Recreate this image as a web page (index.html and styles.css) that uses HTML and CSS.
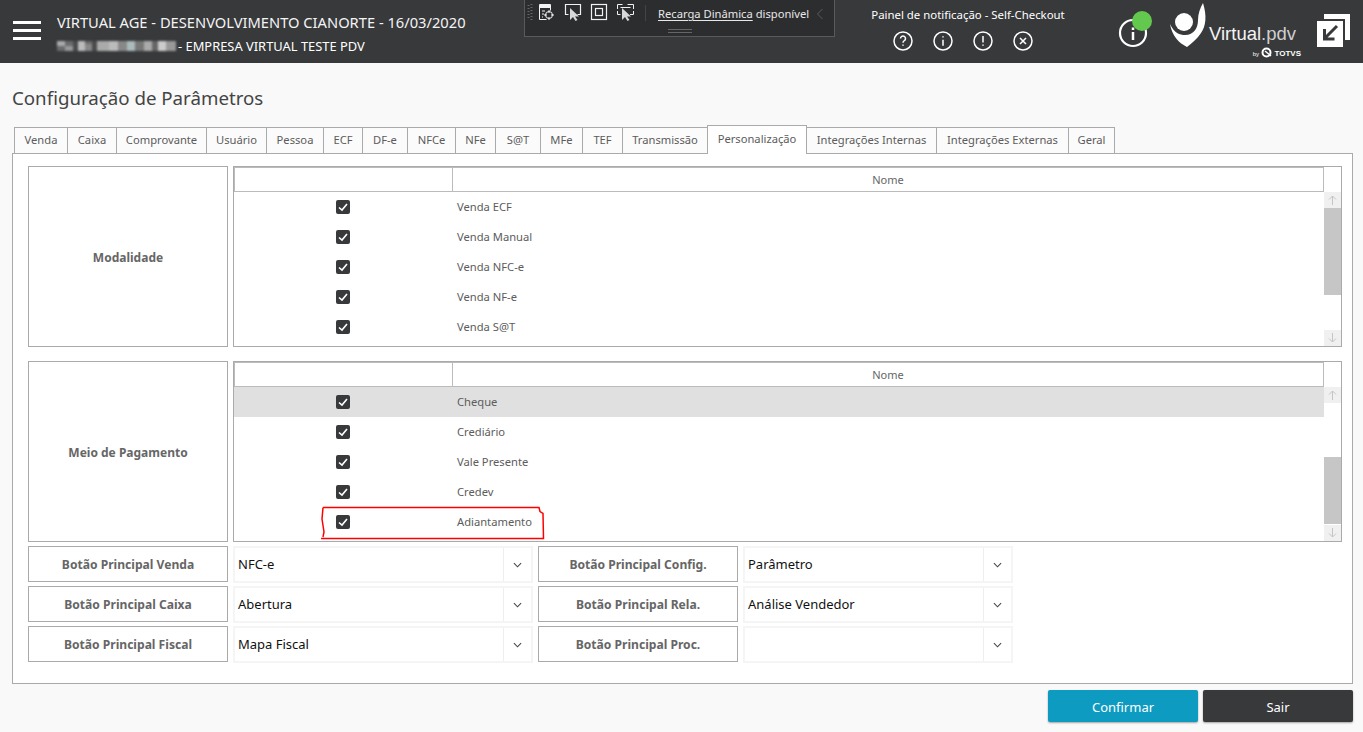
FILE: index.html
```html
<!DOCTYPE html>
<html lang="pt-BR">
<head>
<meta charset="utf-8">
<title>Configuração de Parâmetros</title>
<link rel="stylesheet" href="styles.css">
</head>
<body>
<header class="topbar">
  <div class="menu"><span></span><span></span><span></span></div>
  <div class="titles">
    <div class="title-main">VIRTUAL AGE - DESENVOLVIMENTO CIANORTE - 16/03/2020</div>
    <div class="title-sub">
      <svg class="blur" width="119" height="10" viewBox="0 0 119 10"><rect width="119" height="10" fill="#6a6b6d"/><rect x="0" width="8" height="5" fill="#aaa"/><rect x="8" y="5" width="8" height="5" fill="#999"/><rect x="16" width="5" height="10" fill="#4a4b4d"/><rect x="21" width="7" height="10" fill="#bbb"/><rect x="28" y="3" width="7" height="7" fill="#888"/><rect x="35" width="5" height="10" fill="#4a4b4d"/><rect x="40" width="12" height="10" fill="#aaa"/><rect x="52" width="9" height="10" fill="#bbb"/><rect x="61" width="9" height="10" fill="#888"/><rect x="70" width="8" height="10" fill="#abb"/><rect x="78" width="9" height="10" fill="#777"/><rect x="87" width="8" height="10" fill="#aaa"/><rect x="95" width="6" height="10" fill="#666"/><rect x="101" width="8" height="10" fill="#ccc"/><rect x="109" width="10" height="10" fill="#999"/></svg>
      <span>- EMPRESA VIRTUAL TESTE PDV</span>
    </div>
  </div>
  <div class="live">
    <svg class="live-icons" width="125" height="24" viewBox="0 0 125 24" fill="none" stroke="#f2f2f2" stroke-width="1">
      <path d="M3.500 5v14M6.500 4v16" stroke="#666" stroke-width="2" stroke-dasharray="1 2"/>
      <path d="M21.500 19.500h-7v-15h11v6"/><path d="M14 5h12v3H14z" fill="#f2f2f2" stroke="none"/><path d="M17 11h3M17 14h2M17 17h1"/>
      <circle cx="24" cy="15" r="3.500"/><path d="M24 10v3M24 17v3M19 15h3M26 15h3"/>
      <path d="M43.500 14.500h-3v-10h15v10h-3" stroke-width="1.200"/><path d="M45 8v12l3-3 2.500 4 2-1-2.500-3.500h4z" fill="#d8d8d8" stroke="none"/>
      <rect x="66.500" y="4.500" width="15" height="15" stroke-width="1.200"/><rect x="70.500" y="8.500" width="7" height="7" stroke-width="1.200"/>
      <path d="M92.500 9V4.500h5M102.500 4.500h6v4.500M92.500 11v3.500h3M105 14.500h3.500V11M95.500 7.500h10"/><path d="M97 8v12l3-3 2.500 4 2-1-2.500-3.500h4z" fill="#d8d8d8" stroke="none"/>
      <path d="M120.500 5v16" stroke="#444"/>
    </svg>
    <div class="live-text"><u>Recarga Dinâmica</u> disponível</div>
    <svg class="live-chev" width="8" height="12" viewBox="0 0 8 12" fill="none" stroke="#5c5c5c"><path d="M6.500 1L1.500 6l5 5"/></svg>
    <div class="grip"></div>
  </div>
  <div class="notif">
    <div class="notif-title">Painel de notificação - Self-Checkout</div>
    <div class="notif-icons">
      <svg class="circ" viewBox="0 0 20 20"><circle cx="10" cy="10" r="9"/><path d="M7.500 7.500a2.500 2.500 0 1 1 3.800 2.200c-.9.500-1.300 1-1.300 2"/><path d="M10 13.600v1.200"/></svg>
      <svg class="circ" viewBox="0 0 20 20"><circle cx="10" cy="10" r="9"/><path d="M10 5.200v1.400M10 8.800v6"/></svg>
      <svg class="circ" viewBox="0 0 20 20"><circle cx="10" cy="10" r="9"/><path d="M10 5v6.400M10 13.400v1.400"/></svg>
      <svg class="circ" viewBox="0 0 20 20"><circle cx="10" cy="10" r="9"/><path d="M7 7l6 6M13 7l-6 6"/></svg>
    </div>
  </div>
  <div class="info">
    <svg width="34" height="37" viewBox="0 0 34 37"><circle cx="15" cy="22" r="13" fill="none" stroke="#fff" stroke-width="2.200"/><path d="M15 16.500v2.500M15 21v8" stroke="#fff" stroke-width="2.500"/><circle cx="24" cy="10" r="10" fill="#63c94e"/></svg>
  </div>
  <div class="logo">
    <svg width="40" height="46" viewBox="0 0 40 46"><path d="M33 1C37 14 36 24 31 31 27 37 22 41 17 45 9 41 2 34 0 22 4 31 10 33 15 33 24 33 28 26 28 18 28 12 30 6 33 1z" fill="#fff"/><circle cx="14" cy="20" r="9" fill="#fff"/></svg>
    <div class="logo-text">
      <div class="logo-name">Virtual<span>.pdv</span></div>
      <div class="logo-by"><small>by</small> <svg width="11" height="11" viewBox="0 0 11 11" fill="none" stroke="#fff" stroke-width="2"><circle cx="5.500" cy="5.500" r="4"/><path d="M4 4l6 5" stroke-width="1.500"/></svg> TOTVS</div>
    </div>
  </div>
  <div class="exit">
    <svg width="33" height="33" viewBox="0 0 33 33"><path d="M7 0h26v26h-5V5H7z" fill="#fff"/><rect x="0" y="7" width="26" height="26" fill="#fff"/><path d="M20 12L8 24M7.500 15v10h10" fill="none" stroke="#38393b" stroke-width="3"/></svg>
  </div>
</header>

<main class="page">
  <h1 class="page-title">Configuração de Parâmetros</h1>
  <nav class="tabs">
    <div class="tab">Venda</div><div class="tab">Caixa</div><div class="tab">Comprovante</div><div class="tab">Usuário</div><div class="tab">Pessoa</div><div class="tab">ECF</div><div class="tab">DF-e</div><div class="tab">NFCe</div><div class="tab">NFe</div><div class="tab">S@T</div><div class="tab">MFe</div><div class="tab">TEF</div><div class="tab">Transmissão</div><div class="tab active">Personalização</div><div class="tab">Integrações Internas</div><div class="tab">Integrações Externas</div><div class="tab">Geral</div>
  </nav>
  <section class="panel">
    <div class="group">
      <div class="label">Modalidade</div>
      <div class="table">
        <div class="thead"><div class="th"></div><div class="th">Nome</div></div>
        <div class="tbody">
          <div class="rows">
            <div class="row"><span class="check"><svg viewBox="0 0 14 14"><path d="M3 7.500l3 2.500 5-6"/></svg></span><span class="cell">Venda ECF</span></div>
            <div class="row"><span class="check"><svg viewBox="0 0 14 14"><path d="M3 7.500l3 2.500 5-6"/></svg></span><span class="cell">Venda Manual</span></div>
            <div class="row"><span class="check"><svg viewBox="0 0 14 14"><path d="M3 7.500l3 2.500 5-6"/></svg></span><span class="cell">Venda NFC-e</span></div>
            <div class="row"><span class="check"><svg viewBox="0 0 14 14"><path d="M3 7.500l3 2.500 5-6"/></svg></span><span class="cell">Venda NF-e</span></div>
            <div class="row"><span class="check"><svg viewBox="0 0 14 14"><path d="M3 7.500l3 2.500 5-6"/></svg></span><span class="cell">Venda S@T</span></div>
          </div>
          <div class="scroll">
            <svg class="arrow" viewBox="0 0 17 16"><path d="M8.500 13V4M5 7.500L8.500 4 12 7.500"/></svg>
            <div class="track"><div class="thumb thumb-top"></div></div>
            <svg class="arrow" viewBox="0 0 17 16"><path d="M8.500 3v9M5 8.500L8.500 12 12 8.500"/></svg>
          </div>
        </div>
      </div>
    </div>
    <div class="group group-second">
      <div class="label">Meio de Pagamento</div>
      <div class="table">
        <div class="thead"><div class="th"></div><div class="th">Nome</div></div>
        <div class="tbody">
          <div class="rows">
            <div class="row selected"><span class="check"><svg viewBox="0 0 14 14"><path d="M3 7.500l3 2.500 5-6"/></svg></span><span class="cell">Cheque</span></div>
            <div class="row"><span class="check"><svg viewBox="0 0 14 14"><path d="M3 7.500l3 2.500 5-6"/></svg></span><span class="cell">Crediário</span></div>
            <div class="row"><span class="check"><svg viewBox="0 0 14 14"><path d="M3 7.500l3 2.500 5-6"/></svg></span><span class="cell">Vale Presente</span></div>
            <div class="row"><span class="check"><svg viewBox="0 0 14 14"><path d="M3 7.500l3 2.500 5-6"/></svg></span><span class="cell">Credev</span></div>
            <div class="row"><span class="check"><svg viewBox="0 0 14 14"><path d="M3 7.500l3 2.500 5-6"/></svg></span><span class="cell">Adiantamento</span></div>
          </div>
          <div class="scroll">
            <svg class="arrow" viewBox="0 0 17 16"><path d="M8.500 13V4M5 7.500L8.500 4 12 7.500"/></svg>
            <div class="track"><div class="thumb thumb-bottom"></div></div>
            <svg class="arrow" viewBox="0 0 17 16"><path d="M8.500 3v9M5 8.500L8.500 12 12 8.500"/></svg>
          </div>
        </div>
        <svg class="markup" width="226" height="36" viewBox="0 0 226 36" fill="none" stroke="#f00" stroke-width="1.500"><path d="M3 1.500H219l1 4 3 2 .5 25H1M3 1.500L2 13l2 13-1 5"/></svg>
      </div>
    </div>
    <div class="fields">
      <div class="label small">Botão Principal Venda</div>
      <div class="select"><span>NFC-e</span><i><svg viewBox="0 0 10 6"><path d="M1 1l4 4 4-4"/></svg></i></div>
      <div class="label small">Botão Principal Config.</div>
      <div class="select"><span>Parâmetro</span><i><svg viewBox="0 0 10 6"><path d="M1 1l4 4 4-4"/></svg></i></div>
      <div class="label small">Botão Principal Caixa</div>
      <div class="select"><span>Abertura</span><i><svg viewBox="0 0 10 6"><path d="M1 1l4 4 4-4"/></svg></i></div>
      <div class="label small">Botão Principal Rela.</div>
      <div class="select"><span>Análise Vendedor</span><i><svg viewBox="0 0 10 6"><path d="M1 1l4 4 4-4"/></svg></i></div>
      <div class="label small">Botão Principal Fiscal</div>
      <div class="select"><span>Mapa Fiscal</span><i><svg viewBox="0 0 10 6"><path d="M1 1l4 4 4-4"/></svg></i></div>
      <div class="label small">Botão Principal Proc.</div>
      <div class="select"><span></span><i><svg viewBox="0 0 10 6"><path d="M1 1l4 4 4-4"/></svg></i></div>
    </div>
  </section>
  <footer class="actions">
    <button class="btn btn-primary">Confirmar</button>
    <button class="btn btn-dark">Sair</button>
  </footer>
</main>
</body>
</html>
```

FILE: styles.css
```css
* { box-sizing: border-box; }
html, body { margin: 0; height: 100%; }
body {
  width: 1363px;
  height: 732px;
  overflow: hidden;
  background: #f9f9f9;
  font-family: "Noto Sans", "Liberation Sans", sans-serif;
  font-size: 11.2px;
  color: #555;
}

/* top bar */
.topbar {
  height: 63px;
  background: #38393b;
  color: #fff;
  display: flex;
  align-items: flex-start;
}
.menu {
  width: 57px;
  padding: 21px 0 0 13px;
  display: flex;
  flex-direction: column;
  gap: 5px;
}
.menu span { display: block; width: 28px; height: 3px; background: #fff; }
.titles { width: 467px; padding-top: 12px; }
.title-main { font-size: 14.7px; line-height: 20px; color: #f4f4f4; white-space: nowrap; }
.title-sub { display: flex; align-items: center; gap: 2px; margin-top: 6px; font-size: 12.9px; line-height: 16px; white-space: nowrap; }
.blur { filter: blur(1px); }

.live {
  position: relative;
  width: 311px;
  height: 37px;
  background: #2c2d2f;
  border: 1px solid #5a5a5a;
  border-top: 0;
  display: flex;
  align-items: flex-start;
}
.live-icons { flex: none; }
.live-text { margin: 5px 0 0 8px; font-size: 11.2px; line-height: 17px; color: #e8e8e8; white-space: nowrap; width: 155px; }
.live-text u { text-underline-offset: 2px; }
.live-chev { margin: 8px 0 0 3px; }
.grip { position: absolute; left: 143px; top: 29px; width: 24px; height: 4px; border-top: 1px solid #666; border-bottom: 1px solid #666; }

.notif { width: 283px; padding: 6px 0 0 36px; }
.notif-title { font-size: 11.4px; line-height: 18px; white-space: nowrap; width: 194px; text-align: center; }
.notif-icons { display: flex; gap: 20px; margin: 7px 0 0 22px; }
.circ { width: 20px; height: 20px; fill: none; stroke: #fff; stroke-width: 1.500; flex: none; }
.info { width: 52px; padding-top: 11px; }
.logo { width: 147px; display: flex; padding-top: 2px; }
.logo-text { width: 92px; margin-left: -1px; }
.logo-name { font-family: "Liberation Sans", sans-serif; font-size: 18.5px; line-height: 24px; margin-top: 20px; white-space: nowrap; color: #f4f4f4; }
.logo-name span { color: #cfcfcf; }
.logo-by { font-family: "Liberation Sans", sans-serif; font-size: 8px; font-weight: 700; line-height: 11px; margin-top: 1px; text-align: right; white-space: nowrap; }
.logo-by small { font-size: 6px; font-weight: 400; }
.logo-by svg { vertical-align: -2px; }
.exit { padding-top: 14px; }

/* page */
.page { padding: 0 10px 0 12px; }
.page-title { margin: 0; padding-top: 22px; font-size: 18.7px; font-weight: 400; line-height: 26px; height: 64px; color: #444; }
.tabs {
  display: grid;
  margin-left: 2px;
  grid-template-columns: 53px 49px 90px 60px 57px 39px 45px 48px 40px 45px 42px 40px 85px 99px 130px 132px 47px;
  width: 1101px;
  height: 26px;
  position: relative;
  z-index: 1;
}
.tab {
  background: #fbfbfb;
  border: 1px solid #aaa;
  border-right: 0;
  border-bottom: 0;
  display: flex;
  align-items: center;
  justify-content: center;
  white-space: nowrap;
  color: #5c5c5c;
  height: 26px;
  padding-bottom: 2px;
}
.tab:last-child { border-right: 1px solid #aaa; }
.tab.active { background: #fff; height: 29px; margin-top: -2px; border-right: 1px solid #aaa; padding-bottom: 3px; margin-right: -1px; }

.panel {
  height: 531px;
  background: #fff;
  border: 1px solid #aaa;
  padding: 12px 10px 0 15px;
}
.group { display: grid; grid-template-columns: 200px 1109px; gap: 5px; height: 181px; }
.group-second { margin-top: 14px; }
.label {
  border: 1px solid #aaa;
  display: flex;
  align-items: center;
  justify-content: center;
  font-size: 12px;
  font-weight: 700;
  color: #666;
  padding-top: 1px;
}
.table { position: relative; border: 1px solid #aaa; display: flex; flex-direction: column; }
.thead { display: grid; grid-template-columns: 219px 871px; height: 25px; }
.th { border: 1px solid #bbb; border-left: 0; display: flex; align-items: center; justify-content: center; color: #666; font-size: 11px; }
.th:first-child { border-left: 1px solid #bbb; }
.tbody { flex: 1; display: flex; min-height: 0; }
.rows { flex: 1; }
.row { display: grid; grid-template-columns: 218px 1fr; height: 30px; align-items: center; }
.row.selected { background: #e0e0e0; }
.check { justify-self: center; width: 14px; height: 14px; border-radius: 2px; background: #38393b; display: block; }
.check svg { display: block; width: 14px; height: 14px; fill: none; stroke: #fff; stroke-width: 1.600; }
.cell { padding: 0 0 2px 5px; color: #5c5c5c; }

.scroll { width: 17px; display: flex; flex-direction: column; }
.arrow { width: 17px; height: 16px; background: #f0f0f0; fill: none; stroke: #c4c4c4; stroke-width: 1; flex: none; }
.track { flex: 1; display: flex; flex-direction: column; }
.thumb { height: 87px; background: #c6c6c6; }
.thumb-bottom { height: 67px; margin-top: 54px; }

.markup { position: absolute; left: 86px; top: 144px; pointer-events: none; }

.fields {
  display: grid;
  grid-template-columns: 200px 300px 200px 270px;
  grid-auto-rows: 36px;
  column-gap: 5px;
  row-gap: 4px;
  margin-top: 4px;
}
.label.small { font-size: 12.1px; height: 36px; padding-top: 0; }
.select {
  border: 2px solid #f5f5f5;
  height: 37px;
  display: flex;
  align-items: center;
  justify-content: space-between;
  font-size: 13px;
  color: #111;
  background: #fff;
}
.select span { padding: 0 0 1px 3px; }
.select i { width: 28px; height: 100%; border-left: 1px solid #eee; display: flex; align-items: center; justify-content: center; }
.select svg { width: 9px; height: 6px; fill: none; stroke: #444; stroke-width: 1.200; }

.actions { display: flex; justify-content: flex-end; gap: 5px; margin-top: 6px; }
.btn { width: 150px; height: 32px; border: 0; border-radius: 2px; color: #fff; font: inherit; font-size: 13px; padding: 1px 0 0; box-shadow: 0 1px 2px rgba(0,0,0,.35); }
.btn-primary { background: #0e9bc1; }
.btn-dark { background: #38393b; }
```
